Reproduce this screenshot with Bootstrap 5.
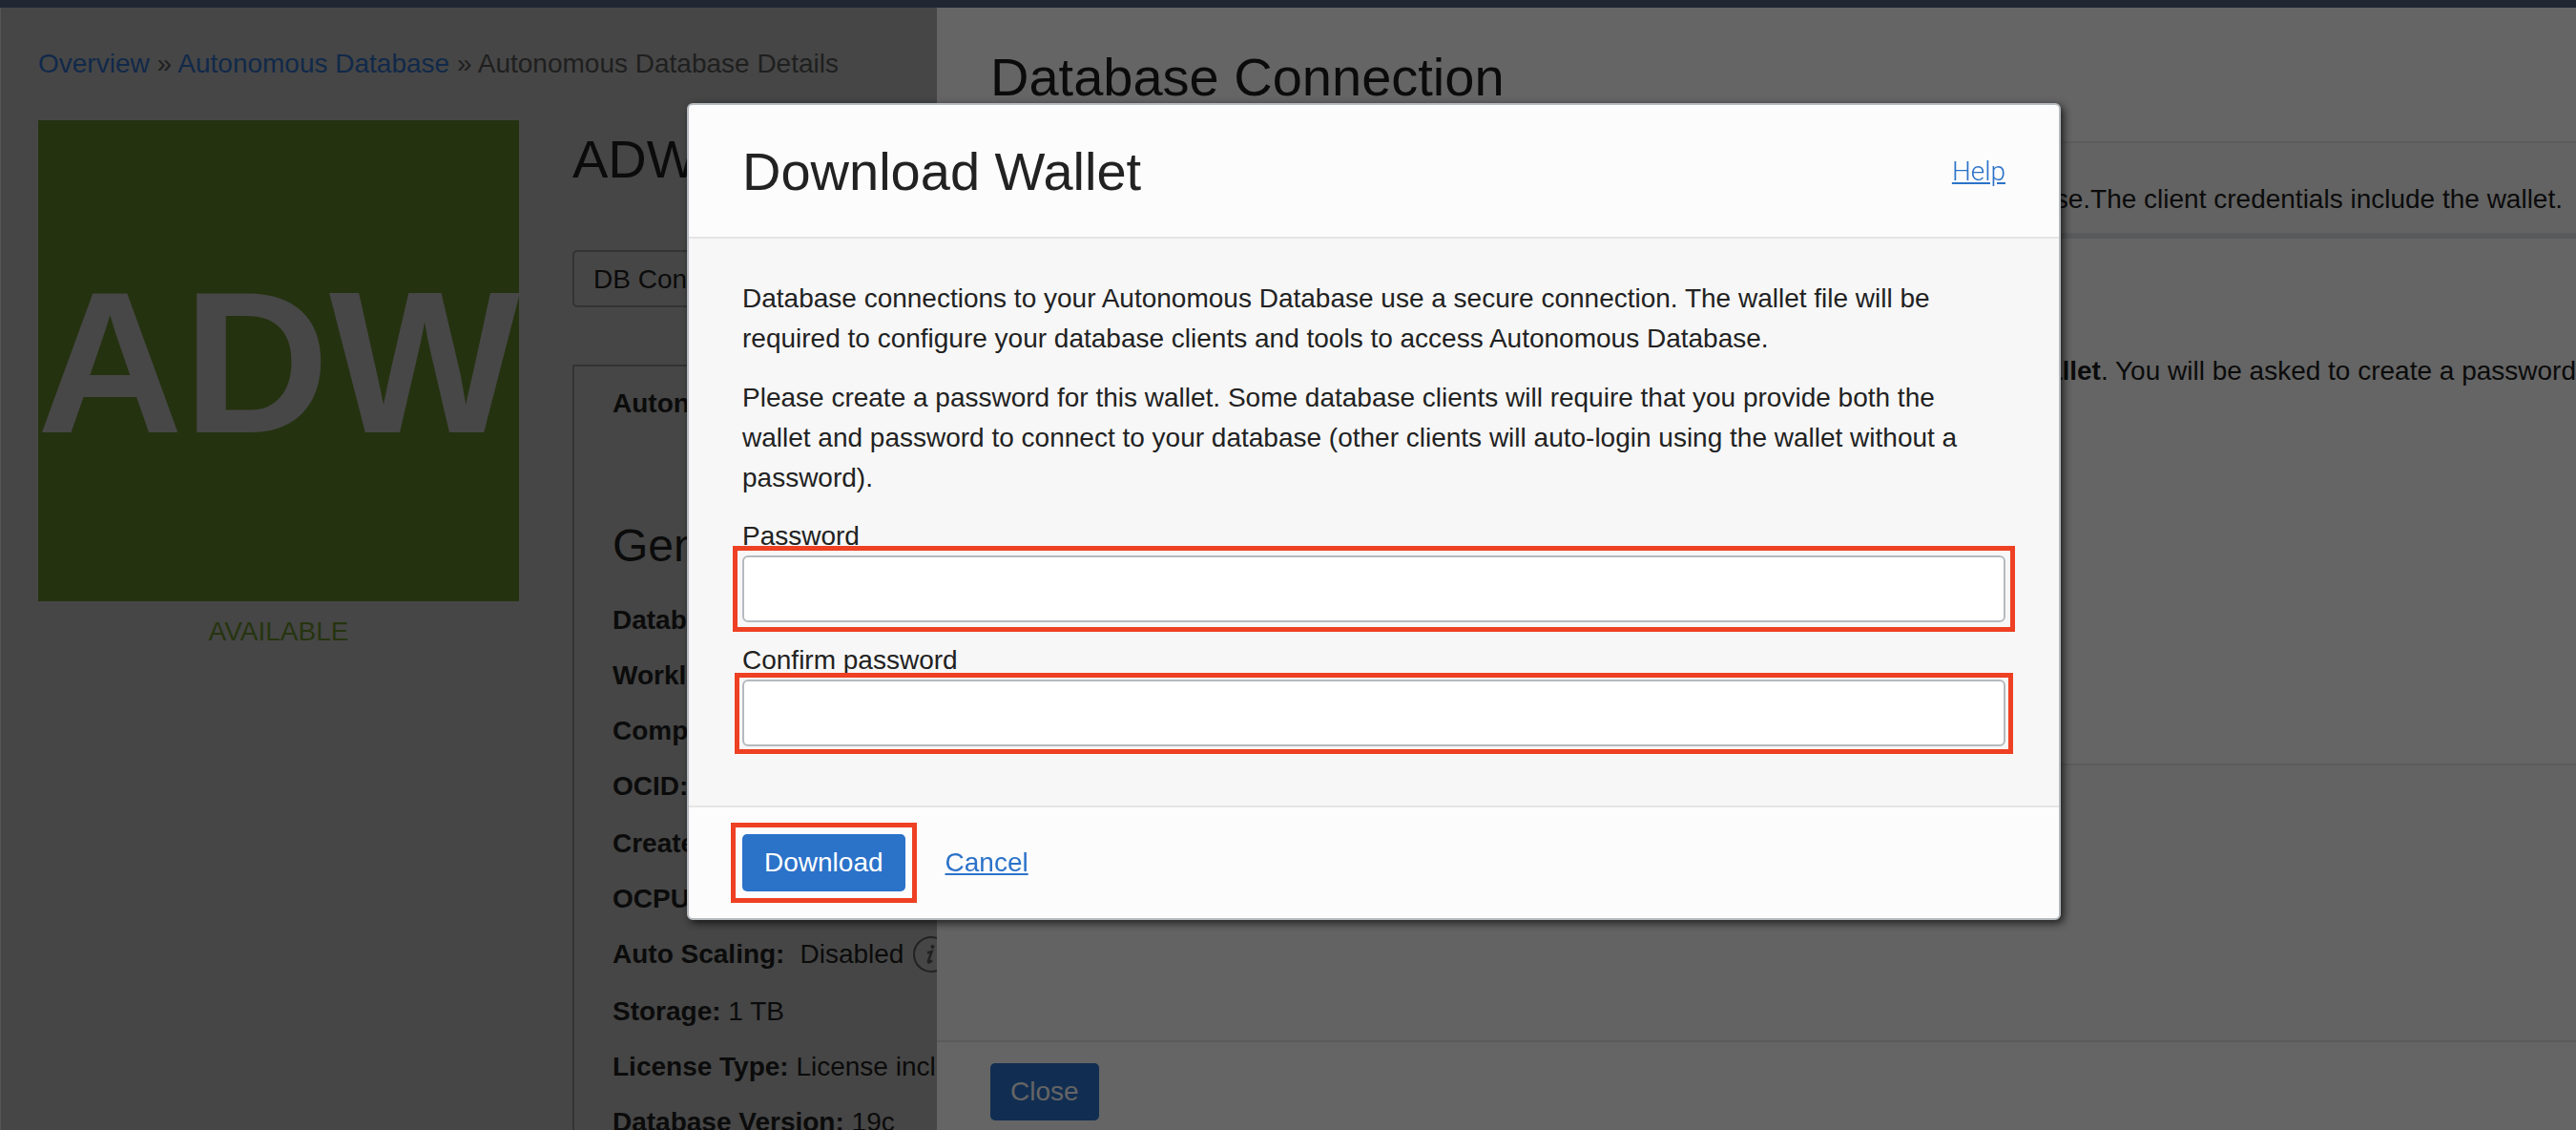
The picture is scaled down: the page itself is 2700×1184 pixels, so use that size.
<!DOCTYPE html>
<html lang="en">
<head>
<meta charset="utf-8">
<meta name="viewport" content="width=device-width, initial-scale=1">
<title>Autonomous Database Details</title>
<link href="https://cdn.jsdelivr.net/npm/bootstrap@5.3.0/dist/css/bootstrap.min.css" rel="stylesheet">
<style>
  body { font-family: "Liberation Sans", Arial, sans-serif; font-size: 28px; line-height: 42px; color: #0b0b0b; background: #464646; }
  h1, h2, h3, p, ul { margin: 0; }
  h1, h2 { font-size: 56px; line-height: 68px; font-weight: 400; }
  .topbar { height: 8px; background: #202733; }

  /* details page */
  .page-pane { width: 982px; padding: 38px 2px 0 39px; border-left: 1px solid #565656; }
  .crumbs { line-height: 42px; color: #1f1f1f; white-space: nowrap; }
  .crumbs a { color: #11294a; text-decoration: none; }
  .layout { gap: 56px; margin-top: 38px; }
  .tile { width: 504px; height: 504px; background: #253210; color: #474747; font-size: 212px; line-height: 508px; font-weight: 700; white-space: nowrap; }
  .status { color: #26340f; margin-top: 11px; }
  .details { min-width: 0; white-space: nowrap; }
  .details h1 { margin-top: 7px; }
  .btn-db { margin-top: 61px; height: 60px; padding: 0 20px; border: 2px solid #333; border-radius: 5px; font-size: 28px; line-height: 58px; color: #0b0b0b; background: #464646; }
  .info-box { margin-top: 60px; border: 2px solid #333; border-right: 0; border-bottom: 0; padding: 18px 0 0 40px; }
  .tab-name { line-height: 42px; font-weight: 700; }
  .info-box h3 { font-size: 48px; line-height: 58px; font-weight: 400; margin-top: 99px; }
  .facts { margin-top: 20px; }
  .facts li { height: 58px; line-height: 58px; }
  .facts li:nth-child(3n+4) { margin-bottom: 2px; }
  .facts svg { width: 38px; height: 38px; flex: none; margin-left: 10px; }

  /* connection drawer */
  .drawer { min-width: 0; background: #656565; }
  .drawer-head { height: 140px; padding: 45px 56px 0; }
  .drawer-note { height: 102px; border-top: 2px solid #5c5c5c; border-bottom: 6px solid #595a5c; background: #636363; padding: 38px 14px 0 56px; }
  .drawer-text { padding: 118px 0 0 56px; height: 550px; }
  .drawer-rest { background: #636363; border-top: 2px solid #5b5b5b; }
  .drawer-foot { height: 94px; border-top: 2px solid #5b5b5b; padding: 22px 56px 0; }
  .one-line { white-space: nowrap; }
  .btn-act { height: 60px; padding: 0 23px; border: 0; border-radius: 5px; font-size: 28px; line-height: 60px; background: #2b72c9; color: #fff; }
  .btn-act.dimmed { background: #112e52; color: #656565; padding: 0 21px; }

  .wallet { padding-left: 180px !important; }
  .wallet .modal-dialog { max-width: 1440px; margin: 108px auto 0; }
  .wallet .modal-content { border: 2px solid #b5babf; border-radius: 6px; background: #fcfcfc; color: #222; box-shadow: 3px 3px 8px rgba(0,0,0,.7); }
  .wallet .modal-header { height: 140px; padding: 2px 56px 0; border-bottom: 2px solid #e5e5e5; }
  .help { font-family: Roboto, "Liberation Sans", sans-serif; font-weight: 300; color: #2b72c9; }
  .wallet .modal-body { padding: 42px 56px 62px; background: #f7f7f7; }
  .wallet p { margin-bottom: 20px; }
  .wallet label { display: block; line-height: 30px; margin: 25px 0 5px; }
  .wallet .form-control { height: 70px; border: 2px solid #b5babf; border-radius: 6px; background: #fff; font-size: 28px; }
  .wallet .modal-footer { padding: 28px 56px; gap: 42px; border-top: 2px solid #e5e5e5; background: #fcfcfc; }
  .wallet .modal-footer > * { margin: 0; }
  .cancel { color: #2b72c9; }

  /* square red markers laid over a control */
  .marked { position: relative; }
  .marked::after { content: ""; position: absolute; inset: -10px; border: 5px solid #ee4023; pointer-events: none; }
  .marked-tight::after { inset: -7px -8px -8px; }
  .marked-wide::after { inset: -12px; }
</style>
<script src="https://cdn.jsdelivr.net/npm/bootstrap@5.3.0/dist/js/bootstrap.bundle.min.js"></script>
</head>
<body class="vh-100 overflow-hidden d-flex flex-column">
<div class="topbar flex-shrink-0"></div>
<div class="d-flex flex-grow-1 overflow-hidden">
  <main class="page-pane flex-shrink-0 overflow-hidden">
    <nav class="crumbs" aria-label="Breadcrumb"><a href="#">Overview</a> » <a href="#">Autonomous Database</a> » Autonomous Database Details</nav>
    <div class="layout d-flex">
      <div class="flex-shrink-0">
        <div class="tile overflow-hidden d-flex justify-content-center">ADW</div>
        <div class="status text-center">AVAILABLE</div>
      </div>
      <section class="details flex-grow-1">
        <h1>ADW</h1>
        <button type="button" class="btn-db">DB Connection</button>
        <div class="info-box">
          <div class="tab-name">Autonomous</div>
          <h3>General</h3>
          <ul class="facts list-unstyled">
            <li><b>Database:</b></li>
            <li><b>Workload:</b></li>
            <li><b>Compart:</b></li>
            <li><b>OCID:</b></li>
            <li><b>Created:</b></li>
            <li><b>OCPU:</b></li>
            <li class="d-flex align-items-center"><b class="me-3">Auto Scaling:</b> Disabled
              <svg viewBox="0 0 38 38" aria-hidden="true"><circle cx="19" cy="19" r="18" fill="none" stroke="#222" stroke-width="2"/><path d="M15 17.500l4.500-1.500-3.500 10c-.5 2 1 2 4-.8" fill="none" stroke="#222" stroke-width="2.600"/><circle cx="20.500" cy="11" r="2" fill="#222"/></svg></li>
            <li><b>Storage:</b> 1 TB</li>
            <li><b>License Type:</b> License included</li>
            <li><b>Database Version:</b> 19c</li>
          </ul>
        </div>
      </section>
    </div>
  </main>
  <aside class="drawer flex-grow-1 d-flex flex-column overflow-hidden">
    <header class="drawer-head flex-shrink-0"><h2 class="lh-1">Database Connection</h2></header>
    <div class="drawer-note flex-shrink-0 d-flex justify-content-end one-line"><div>connect to your database.The client credentials include the wallet.</div></div>
    <div class="drawer-text flex-shrink-0 d-flex justify-content-end one-line"><div>click <b>Download Wallet</b>. You will be asked to create a password</div></div>
    <div class="drawer-rest flex-grow-1"></div>
    <footer class="drawer-foot flex-shrink-0"><button type="button" class="btn-act dimmed d-block">Close</button></footer>
  </aside>
</div>

<div class="modal show d-block wallet" role="dialog" aria-modal="true" aria-labelledby="walletTitle">
  <div class="modal-dialog">
    <form class="modal-content">
      <div class="modal-header">
        <h2 id="walletTitle">Download Wallet</h2>
        <a class="help" href="#">Help</a>
      </div>
      <div class="modal-body">
        <p>Database connections to your Autonomous Database use a secure connection. The wallet file will be required to configure your database clients and tools to access Autonomous Database.</p>
        <p>Please create a password for this wallet. Some database clients will require that you provide both the wallet and password to connect to your database (other clients will auto-login using the wallet without a password).</p>
        <label for="pw">Password</label>
        <div class="marked"><input id="pw" type="password" class="form-control"></div>
        <label for="pw2">Confirm password</label>
        <div class="marked marked-tight"><input id="pw2" type="password" class="form-control"></div>
      </div>
      <div class="modal-footer justify-content-start">
        <div class="marked marked-wide"><button type="button" class="btn-act d-block">Download</button></div>
        <a class="cancel" href="#">Cancel</a>
      </div>
    </form>
  </div>
</div>
</body>
</html>
